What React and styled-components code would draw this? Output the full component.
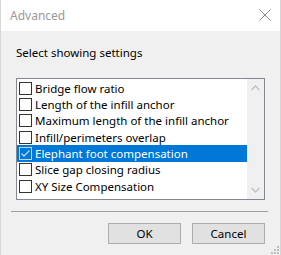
import React from "react";
import styled, { createGlobalStyle } from "styled-components";

const GlobalStyle = createGlobalStyle`
  html, body {
    margin: 0;
    padding: 0;
    background: #f0f0f0;
  }
  * {
    box-sizing: border-box;
  }
`;

const settings = [
  { label: "Bridge flow ratio", checked: false },
  { label: "Length of the infill anchor", checked: false },
  { label: "Maximum length of the infill anchor", checked: false },
  { label: "Infill/perimeters overlap", checked: false },
  { label: "Elephant foot compensation", checked: true, selected: true },
  { label: "Slice gap closing radius", checked: false },
  { label: "XY Size Compensation", checked: false },
];

const App = () => {
  return (
    <>
      <GlobalStyle />
      <Window>
        <TitleBar>
          <Title>Advanced</Title>
          <CloseButton>
            <svg width="12" height="12" viewBox="0 0 12 12">
              <path d="M0.5 0.5 L11.5 11.5 M11.5 0.5 L0.5 11.5" stroke="#8a8a8a" strokeWidth="1" />
            </svg>
          </CloseButton>
        </TitleBar>
        <Body>
          <Caption>Select showing settings</Caption>
          <ListBox>
            <Items>
              {settings.map((item) => (
                <Row key={item.label} $selected={item.selected}>
                  <CheckBox $selected={item.selected}>
                    {item.checked && (
                      <svg width="11" height="11" viewBox="0 0 11 11">
                        <path d="M1.5 5.5 L4 8 L9.5 2.5" fill="none" stroke="#b8d6f0" strokeWidth="1.3" />
                      </svg>
                    )}
                  </CheckBox>
                  <RowLabel>{item.label}</RowLabel>
                </Row>
              ))}
            </Items>
            <ScrollBar>
              <Arrow viewBox="0 0 9 6">
                <path d="M0.5 5 L4.5 1 L8.5 5" fill="none" stroke="#c2c2c2" strokeWidth="1.4" />
              </Arrow>
              <Arrow viewBox="0 0 9 6">
                <path d="M0.5 1 L4.5 5 L8.5 1" fill="none" stroke="#c2c2c2" strokeWidth="1.4" />
              </Arrow>
            </ScrollBar>
          </ListBox>
        </Body>
        <Separator />
        <ButtonRow>
          <Button>OK</Button>
          <Button>Cancel</Button>
        </ButtonRow>
        <Grip>
          <svg width="10" height="10" viewBox="0 0 10 10">
            {[
              [8, 0],
              [8, 3],
              [5, 3],
              [8, 6],
              [5, 6],
              [2, 6],
            ].map(([x, y]) => (
              <rect key={`${x}-${y}`} x={x} y={y + 2} width="2" height="2" fill="#bdbdbd" />
            ))}
          </svg>
        </Grip>
      </Window>
    </>
  );
};

const Window = styled.div`
  position: relative;
  width: 281px;
  height: 255px;
  background: #f0f0f0;
  border-left: 1px solid #d6d6d6;
  border-right: 1px solid #d6d6d6;
  font-family: "Noto Sans", "Open Sans", sans-serif;
  font-size: 11.5px;
  color: #000;
  display: flex;
  flex-direction: column;
`;

const TitleBar = styled.div`
  height: 31px;
  background: #fff;
  display: flex;
  align-items: center;
  justify-content: space-between;
  padding: 0 9px 0 9px;
`;

const Title = styled.div`
  color: #999;
  font-size: 12px;
  margin-top: -1px;
`;

const CloseButton = styled.div`
  display: flex;
  align-items: center;
  margin-top: -1px;
`;

const Body = styled.div`
  padding: 0 15px;
`;

const Caption = styled.div`
  margin-top: 13px;
  height: 17px;
  line-height: 17px;
`;

const ListBox = styled.div`
  margin-top: 17px;
  width: 249px;
  height: 122px;
  border: 1px solid #828790;
  background: #fff;
  display: flex;
`;

const Items = styled.div`
  flex: 1;
  padding-top: 1px;
`;

const Row = styled.div`
  height: 16.33px;
  display: flex;
  align-items: center;
  padding-left: 2px;
  background: ${(p) => (p.$selected ? "#0078d7" : "transparent")};
  color: ${(p) => (p.$selected ? "#fff" : "#000")};
`;

const CheckBox = styled.div`
  width: 13px;
  height: 13px;
  border: 1px solid ${(p) => (p.$selected ? "#bcd7ee" : "#333")};
  background: ${(p) => (p.$selected ? "transparent" : "#fff")};
  display: flex;
  align-items: center;
  justify-content: center;
  flex-shrink: 0;
`;

const RowLabel = styled.span`
  margin-left: 3px;
  white-space: nowrap;
`;

const ScrollBar = styled.div`
  width: 17px;
  background: #f0f0f0;
  display: flex;
  flex-direction: column;
  justify-content: space-between;
  align-items: center;
  padding: 6px 0;
`;

const Arrow = styled.svg`
  width: 9px;
  height: 6px;
`;

const Separator = styled.div`
  margin: 11px 12px 0 10px;
  border-top: 1px solid #a0a0a0;
`;

const ButtonRow = styled.div`
  display: flex;
  justify-content: flex-end;
  gap: 11px;
  padding-right: 15px;
  margin-top: 11px;
`;

const Button = styled.div`
  width: 73px;
  height: 21px;
  border: 1px solid #adadad;
  background: #e1e1e1;
  display: flex;
  align-items: center;
  justify-content: center;
`;

const Grip = styled.div`
  position: absolute;
  right: 1px;
  bottom: 1px;
  display: flex;
`;

export default App;
